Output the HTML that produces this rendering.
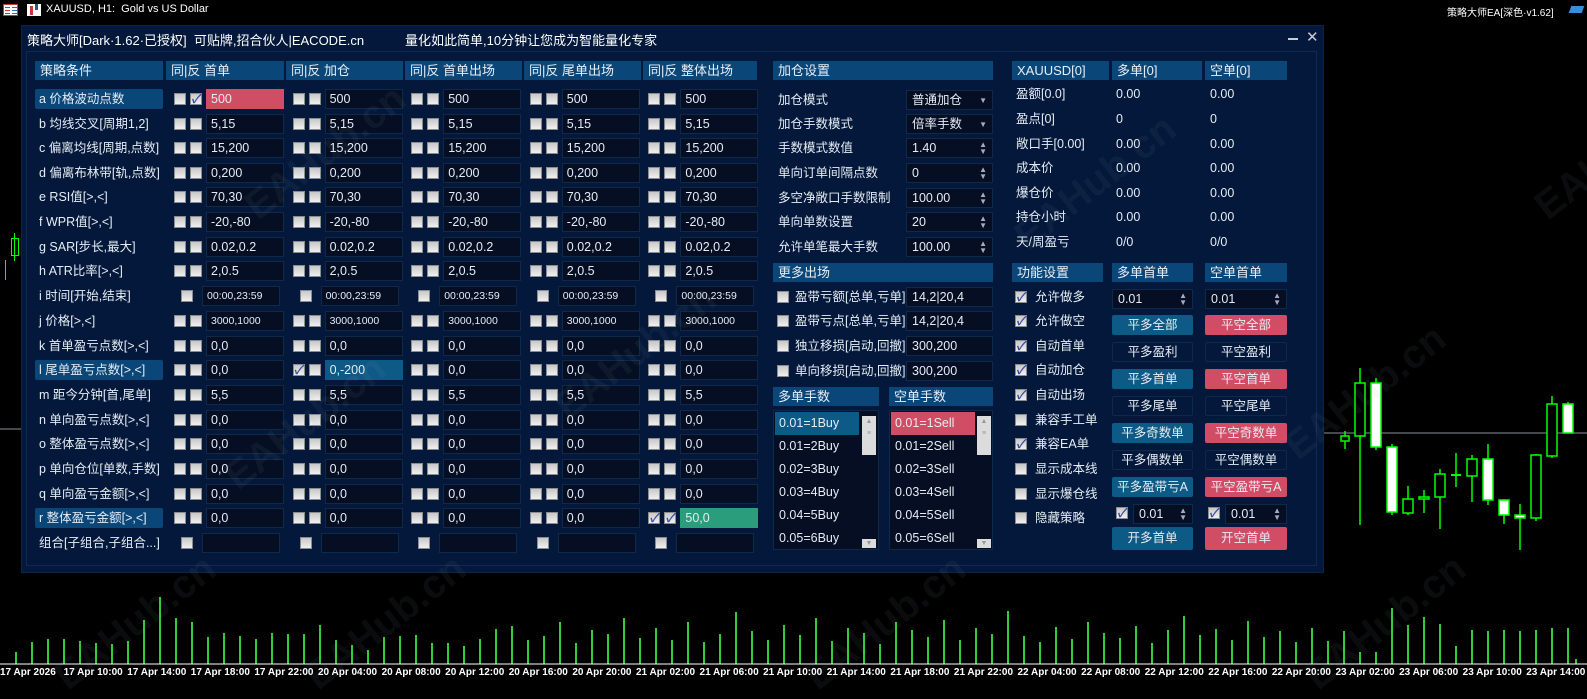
<!DOCTYPE html>
<html><head><meta charset="utf-8"><style>
*{box-sizing:border-box;margin:0;padding:0}
body{width:1587px;height:680px;background:#000;position:relative;overflow:hidden;font-family:"Liberation Sans","Noto Sans CJK SC",sans-serif;color:#e6ecf3;font-size:13px}
.a{position:absolute}
.panel{left:21px;top:25px;width:1303px;height:548px;background:#03183a;border:1px solid #0a2448}
.inner{left:26px;top:51px;width:1291px;height:515px;border:1px solid #0c2a52}
.hd{position:absolute;height:19px;background:#0b4679;color:#e8eef5;line-height:19px;padding-left:5px;font-size:13px}
.row{position:absolute;left:35px;height:20px;display:flex;align-items:center}
.lb{width:128px;height:20px;line-height:20px;padding-left:4px;white-space:nowrap;font-size:12.5px;margin-right:11px;flex:none}
.lb.h{background:#0b4679;border-radius:2px}
.g{width:118.6px;display:flex;align-items:center;flex:none}
.cb{width:12px;height:12px;background:linear-gradient(#c8c8c8,#f0f0f0);border:1px solid #8c8c8c;margin-right:4px;flex:none;position:relative}
.cb.a{position:absolute;margin:0}
.cb.k::after{content:"✓";position:absolute;left:0;top:-4px;font-size:12px;color:#3a4aa0;font-weight:bold}
.in{width:78px;height:20px;background:#050e22;border:1px solid #0e2a48;line-height:18px;padding-left:4px;font-size:12.5px;flex:none;white-space:nowrap;overflow:hidden}
.sm{font-size:10.5px}
.red{background:#d04d65;border-color:#d04d65}
.blu{background:#0d5a86;border-color:#0d5a86}
.grn{background:#2a9d7c;border-color:#2a9d7c}
.one{margin-left:7px;margin-right:9px}
.lab{position:absolute;font-size:12.5px;white-space:nowrap;line-height:20px;height:20px}
.box{position:absolute;height:20px;background:#050e22;border:1px solid #0e2a48;line-height:18px;padding-left:5px;font-size:12.5px}
.arr{position:absolute;right:5px;top:0;font-size:8px;line-height:7px;color:#aab;text-align:center}
.btn{position:absolute;height:20px;line-height:20px;text-align:center;font-size:12.5px;border-radius:2px}
.bb{background:#0d5a86}
.br{background:#d04d65}
.bo{border:1px solid #0e2a48;line-height:18px}
.item{position:absolute;height:23px;line-height:23px;padding-left:4px;font-size:12.5px}
.wm{position:absolute;font:bold 40px "Liberation Sans",sans-serif;color:rgba(160,170,185,0.07);transform:rotate(-38deg);white-space:nowrap}
</style></head><body>

<div class="a" style="left:3px;top:4px;width:15px;height:12px;background:#fff;border:1px solid #c33"><div class="a" style="left:1px;top:2px;width:5px;height:1px;background:#c33;box-shadow:0 3px #c33,0 6px #c33,7px 0 #36c,7px 3px #36c,7px 6px #36c"></div></div>
<div class="a" style="left:27px;top:4px;width:14px;height:12px;background:#fff"><div class="a" style="left:3px;top:2px;width:3px;height:9px;background:#c33"></div><div class="a" style="left:8px;top:0;width:3px;height:6px;background:#357"></div></div>
<div class="a" style="left:46px;top:3px;font-size:11px;color:#fff">XAUUSD, H1:&nbsp; Gold vs US Dollar</div>
<div class="a" style="left:1447px;top:4px;font-size:10px;color:#fff">策略大师EA[深色·v1.62]</div>
<div class="a" style="left:1570px;top:6px;width:13px;height:7px;background:#3a8ed8;transform:skewX(-20deg)"></div>

<div class="a" style="left:14px;top:233px;width:1px;height:28px;background:#0f0"></div>
<div class="a" style="left:11px;top:238px;width:8px;height:18px;border:1px solid #0f0"></div>
<div class="a" style="left:5px;top:260px;width:1px;height:20px;background:#0f0"></div>

<svg class="a" style="left:0;top:0" width="1587" height="680">
<line x1="1320" y1="433" x2="1587" y2="433" stroke="#8a8f99" stroke-width="1"/>
<line x1="0" y1="429" x2="21" y2="429" stroke="#8a8f99" stroke-width="1"/>
<g stroke="#00ff00" stroke-width="1.5">
<line x1="1345" y1="431" x2="1345" y2="449"/><rect x="1341" y="436" width="8" height="5" fill="#000"/>
<line x1="1360" y1="368" x2="1360" y2="525"/><rect x="1355" y="383" width="10" height="53" fill="#000"/>
<line x1="1376" y1="378" x2="1376" y2="450"/><rect x="1371" y="383" width="10" height="64" fill="#fff"/>
<line x1="1392" y1="444" x2="1392" y2="515"/><rect x="1387" y="447" width="10" height="65" fill="#fff"/>
<line x1="1408" y1="486" x2="1408" y2="515"/><rect x="1403" y="499" width="10" height="14" fill="#000"/>
<line x1="1424" y1="490" x2="1424" y2="513"/><rect x="1419" y="497" width="10" height="2" fill="#000"/>
<line x1="1440" y1="469" x2="1440" y2="529"/><rect x="1435" y="474" width="10" height="23" fill="#000"/>
<line x1="1456" y1="453" x2="1456" y2="487"/><line x1="1451" y1="475" x2="1461" y2="475" stroke-width="2"/>
<line x1="1472" y1="455" x2="1472" y2="502"/><rect x="1467" y="459" width="10" height="17" fill="#000"/>
<line x1="1488" y1="444" x2="1488" y2="505"/><rect x="1483" y="459" width="10" height="41" fill="#fff"/>
<line x1="1504" y1="499" x2="1504" y2="524"/><rect x="1499" y="500" width="10" height="15" fill="#fff"/>
<line x1="1520" y1="504" x2="1520" y2="550"/><rect x="1515" y="515" width="10" height="3" fill="#fff"/>
<line x1="1536" y1="454" x2="1536" y2="521"/><rect x="1531" y="455" width="10" height="63" fill="#000"/>
<line x1="1552" y1="396" x2="1552" y2="458"/><rect x="1547" y="404" width="10" height="52" fill="#000"/>
<line x1="1568" y1="402" x2="1568" y2="433"/><rect x="1563" y="404" width="10" height="29" fill="#fff"/>
</g>
<path stroke="#32cd32" stroke-width="2" d="M16 664V652M32 664V642M48 664V639M64 664V639M80 664V641M96 664V643M112 664V644M128 664V641M144 664V620M160 664V597M176 664V618M192 664V622M208 664V637M224 664V633M240 664V636M256 664V639M272 664V633M288 664V634M304 664V634M320 664V625M336 664V640M352 664V645M368 664V650M384 664V637M400 664V636M416 664V635M432 664V643M448 664V643M464 664V646M480 664V639M496 664V629M512 664V626M528 664V640M544 664V636M560 664V622M576 664V643M592 664V630M608 664V634M624 664V618M640 664V638M656 664V628M672 664V640M688 664V622M704 664V642M720 664V634M736 664V612M752 664V631M768 664V640M784 664V625M800 664V635M816 664V618M832 664V641M848 664V628M864 664V633M880 664V644M896 664V622M912 664V630M928 664V637M944 664V620M960 664V640M976 664V628M992 664V634M1008 664V611M1024 664V636M1040 664V642M1056 664V627M1072 664V639M1088 664V622M1104 664V633M1120 664V638M1136 664V626M1152 664V643M1168 664V630M1184 664V616M1200 664V635M1216 664V629M1232 664V640M1248 664V621M1264 664V637M1280 664V631M1296 664V642M1312 664V628M1328 664V641M1344 664V631M1360 664V652M1376 664V652M1392 664V608M1408 664V625M1424 664V617M1440 664V624M1456 664V646M1472 664V630M1488 664V631M1504 664V630M1520 664V631M1536 664V630M1552 664V628M1568 664V628M1576 664V659"/>
<line x1="0" y1="664" x2="1587" y2="664" stroke="#fff" stroke-width="1"/>
</svg>
<div class="a" style="left:0;top:667px;display:flex;font:bold 10px 'Liberation Sans',sans-serif;color:#fff;white-space:nowrap">
<span style="width:63.6px">17 Apr 2026</span><span style="width:63.6px">17 Apr 10:00</span><span style="width:63.6px">17 Apr 14:00</span><span style="width:63.6px">17 Apr 18:00</span><span style="width:63.6px">17 Apr 22:00</span><span style="width:63.6px">20 Apr 04:00</span><span style="width:63.6px">20 Apr 08:00</span><span style="width:63.6px">20 Apr 12:00</span><span style="width:63.6px">20 Apr 16:00</span><span style="width:63.6px">20 Apr 20:00</span><span style="width:63.6px">21 Apr 02:00</span><span style="width:63.6px">21 Apr 06:00</span><span style="width:63.6px">21 Apr 10:00</span><span style="width:63.6px">21 Apr 14:00</span><span style="width:63.6px">21 Apr 18:00</span><span style="width:63.6px">21 Apr 22:00</span><span style="width:63.6px">22 Apr 04:00</span><span style="width:63.6px">22 Apr 08:00</span><span style="width:63.6px">22 Apr 12:00</span><span style="width:63.6px">22 Apr 16:00</span><span style="width:63.6px">22 Apr 20:00</span><span style="width:63.6px">23 Apr 02:00</span><span style="width:63.6px">23 Apr 06:00</span><span style="width:63.6px">23 Apr 10:00</span><span style="width:63.6px">23 Apr 14:00</span>
</div>

<div class="a panel"></div>
<div class="a inner"></div>
<div class="a" style="left:27px;top:30px;font-size:13px;color:#fff">策略大师[Dark·1.62·已授权]&nbsp; 可贴牌,招合伙人|EACODE.cn</div>
<div class="a" style="left:405px;top:30px;font-size:13px;color:#fff">量化如此简单,10分钟让您成为智能量化专家</div>
<div class="a" style="left:1288px;top:38px;width:10px;height:2px;background:#c8ccd4"></div>
<div class="a" style="left:1306px;top:28px;font-size:15px;color:#c8ccd4">✕</div>

<div class="hd" style="left:35px;top:61px;width:128px">策略条件</div>
<div class="hd" style="left:166px;top:61px;width:118px">同|反 首单</div>
<div class="hd" style="left:286px;top:61px;width:117px">同|反 加仓</div>
<div class="hd" style="left:405px;top:61px;width:117px">同|反 首单出场</div>
<div class="hd" style="left:524px;top:61px;width:117px">同|反 尾单出场</div>
<div class="hd" style="left:643px;top:61px;width:114px">同|反 整体出场</div>

<div class="row" style="top:89px"><div class="lb h">a 价格波动点数</div><div class="g"><i class="cb"></i><i class="cb k"></i><div class="in red">500</div></div><div class="g"><i class="cb"></i><i class="cb"></i><div class="in">500</div></div><div class="g"><i class="cb"></i><i class="cb"></i><div class="in">500</div></div><div class="g"><i class="cb"></i><i class="cb"></i><div class="in">500</div></div><div class="g"><i class="cb"></i><i class="cb"></i><div class="in">500</div></div></div>
<div class="row" style="top:114px"><div class="lb">b 均线交叉[周期1,2]</div><div class="g"><i class="cb"></i><i class="cb"></i><div class="in">5,15</div></div><div class="g"><i class="cb"></i><i class="cb"></i><div class="in">5,15</div></div><div class="g"><i class="cb"></i><i class="cb"></i><div class="in">5,15</div></div><div class="g"><i class="cb"></i><i class="cb"></i><div class="in">5,15</div></div><div class="g"><i class="cb"></i><i class="cb"></i><div class="in">5,15</div></div></div>
<div class="row" style="top:138px"><div class="lb">c 偏离均线[周期,点数]</div><div class="g"><i class="cb"></i><i class="cb"></i><div class="in">15,200</div></div><div class="g"><i class="cb"></i><i class="cb"></i><div class="in">15,200</div></div><div class="g"><i class="cb"></i><i class="cb"></i><div class="in">15,200</div></div><div class="g"><i class="cb"></i><i class="cb"></i><div class="in">15,200</div></div><div class="g"><i class="cb"></i><i class="cb"></i><div class="in">15,200</div></div></div>
<div class="row" style="top:163px"><div class="lb">d 偏离布林带[轨,点数]</div><div class="g"><i class="cb"></i><i class="cb"></i><div class="in">0,200</div></div><div class="g"><i class="cb"></i><i class="cb"></i><div class="in">0,200</div></div><div class="g"><i class="cb"></i><i class="cb"></i><div class="in">0,200</div></div><div class="g"><i class="cb"></i><i class="cb"></i><div class="in">0,200</div></div><div class="g"><i class="cb"></i><i class="cb"></i><div class="in">0,200</div></div></div>
<div class="row" style="top:187px"><div class="lb">e RSI值[&gt;,&lt;]</div><div class="g"><i class="cb"></i><i class="cb"></i><div class="in">70,30</div></div><div class="g"><i class="cb"></i><i class="cb"></i><div class="in">70,30</div></div><div class="g"><i class="cb"></i><i class="cb"></i><div class="in">70,30</div></div><div class="g"><i class="cb"></i><i class="cb"></i><div class="in">70,30</div></div><div class="g"><i class="cb"></i><i class="cb"></i><div class="in">70,30</div></div></div>
<div class="row" style="top:212px"><div class="lb">f WPR值[&gt;,&lt;]</div><div class="g"><i class="cb"></i><i class="cb"></i><div class="in">-20,-80</div></div><div class="g"><i class="cb"></i><i class="cb"></i><div class="in">-20,-80</div></div><div class="g"><i class="cb"></i><i class="cb"></i><div class="in">-20,-80</div></div><div class="g"><i class="cb"></i><i class="cb"></i><div class="in">-20,-80</div></div><div class="g"><i class="cb"></i><i class="cb"></i><div class="in">-20,-80</div></div></div>
<div class="row" style="top:237px"><div class="lb">g SAR[步长,最大]</div><div class="g"><i class="cb"></i><i class="cb"></i><div class="in">0.02,0.2</div></div><div class="g"><i class="cb"></i><i class="cb"></i><div class="in">0.02,0.2</div></div><div class="g"><i class="cb"></i><i class="cb"></i><div class="in">0.02,0.2</div></div><div class="g"><i class="cb"></i><i class="cb"></i><div class="in">0.02,0.2</div></div><div class="g"><i class="cb"></i><i class="cb"></i><div class="in">0.02,0.2</div></div></div>
<div class="row" style="top:261px"><div class="lb">h ATR比率[&gt;,&lt;]</div><div class="g"><i class="cb"></i><i class="cb"></i><div class="in">2,0.5</div></div><div class="g"><i class="cb"></i><i class="cb"></i><div class="in">2,0.5</div></div><div class="g"><i class="cb"></i><i class="cb"></i><div class="in">2,0.5</div></div><div class="g"><i class="cb"></i><i class="cb"></i><div class="in">2,0.5</div></div><div class="g"><i class="cb"></i><i class="cb"></i><div class="in">2,0.5</div></div></div>
<div class="row" style="top:286px"><div class="lb">i 时间[开始,结束]</div><div class="g"><i class="cb one"></i><div class="in sm">00:00,23:59</div></div><div class="g"><i class="cb one"></i><div class="in sm">00:00,23:59</div></div><div class="g"><i class="cb one"></i><div class="in sm">00:00,23:59</div></div><div class="g"><i class="cb one"></i><div class="in sm">00:00,23:59</div></div><div class="g"><i class="cb one"></i><div class="in sm">00:00,23:59</div></div></div>
<div class="row" style="top:311px"><div class="lb">j 价格[&gt;,&lt;]</div><div class="g"><i class="cb"></i><i class="cb"></i><div class="in sm">3000,1000</div></div><div class="g"><i class="cb"></i><i class="cb"></i><div class="in sm">3000,1000</div></div><div class="g"><i class="cb"></i><i class="cb"></i><div class="in sm">3000,1000</div></div><div class="g"><i class="cb"></i><i class="cb"></i><div class="in sm">3000,1000</div></div><div class="g"><i class="cb"></i><i class="cb"></i><div class="in sm">3000,1000</div></div></div>
<div class="row" style="top:336px"><div class="lb">k 首单盈亏点数[&gt;,&lt;]</div><div class="g"><i class="cb"></i><i class="cb"></i><div class="in">0,0</div></div><div class="g"><i class="cb"></i><i class="cb"></i><div class="in">0,0</div></div><div class="g"><i class="cb"></i><i class="cb"></i><div class="in">0,0</div></div><div class="g"><i class="cb"></i><i class="cb"></i><div class="in">0,0</div></div><div class="g"><i class="cb"></i><i class="cb"></i><div class="in">0,0</div></div></div>
<div class="row" style="top:360px"><div class="lb h">l 尾单盈亏点数[&gt;,&lt;]</div><div class="g"><i class="cb"></i><i class="cb"></i><div class="in">0,0</div></div><div class="g"><i class="cb k"></i><i class="cb"></i><div class="in blu">0,-200</div></div><div class="g"><i class="cb"></i><i class="cb"></i><div class="in">0,0</div></div><div class="g"><i class="cb"></i><i class="cb"></i><div class="in">0,0</div></div><div class="g"><i class="cb"></i><i class="cb"></i><div class="in">0,0</div></div></div>
<div class="row" style="top:385px"><div class="lb">m 距今分钟[首,尾单]</div><div class="g"><i class="cb"></i><i class="cb"></i><div class="in">5,5</div></div><div class="g"><i class="cb"></i><i class="cb"></i><div class="in">5,5</div></div><div class="g"><i class="cb"></i><i class="cb"></i><div class="in">5,5</div></div><div class="g"><i class="cb"></i><i class="cb"></i><div class="in">5,5</div></div><div class="g"><i class="cb"></i><i class="cb"></i><div class="in">5,5</div></div></div>
<div class="row" style="top:410px"><div class="lb">n 单向盈亏点数[&gt;,&lt;]</div><div class="g"><i class="cb"></i><i class="cb"></i><div class="in">0,0</div></div><div class="g"><i class="cb"></i><i class="cb"></i><div class="in">0,0</div></div><div class="g"><i class="cb"></i><i class="cb"></i><div class="in">0,0</div></div><div class="g"><i class="cb"></i><i class="cb"></i><div class="in">0,0</div></div><div class="g"><i class="cb"></i><i class="cb"></i><div class="in">0,0</div></div></div>
<div class="row" style="top:434px"><div class="lb">o 整体盈亏点数[&gt;,&lt;]</div><div class="g"><i class="cb"></i><i class="cb"></i><div class="in">0,0</div></div><div class="g"><i class="cb"></i><i class="cb"></i><div class="in">0,0</div></div><div class="g"><i class="cb"></i><i class="cb"></i><div class="in">0,0</div></div><div class="g"><i class="cb"></i><i class="cb"></i><div class="in">0,0</div></div><div class="g"><i class="cb"></i><i class="cb"></i><div class="in">0,0</div></div></div>
<div class="row" style="top:459px"><div class="lb">p 单向仓位[单数,手数]</div><div class="g"><i class="cb"></i><i class="cb"></i><div class="in">0,0</div></div><div class="g"><i class="cb"></i><i class="cb"></i><div class="in">0,0</div></div><div class="g"><i class="cb"></i><i class="cb"></i><div class="in">0,0</div></div><div class="g"><i class="cb"></i><i class="cb"></i><div class="in">0,0</div></div><div class="g"><i class="cb"></i><i class="cb"></i><div class="in">0,0</div></div></div>
<div class="row" style="top:484px"><div class="lb">q 单向盈亏金额[&gt;,&lt;]</div><div class="g"><i class="cb"></i><i class="cb"></i><div class="in">0,0</div></div><div class="g"><i class="cb"></i><i class="cb"></i><div class="in">0,0</div></div><div class="g"><i class="cb"></i><i class="cb"></i><div class="in">0,0</div></div><div class="g"><i class="cb"></i><i class="cb"></i><div class="in">0,0</div></div><div class="g"><i class="cb"></i><i class="cb"></i><div class="in">0,0</div></div></div>
<div class="row" style="top:508px"><div class="lb h">r 整体盈亏金额[&gt;,&lt;]</div><div class="g"><i class="cb"></i><i class="cb"></i><div class="in">0,0</div></div><div class="g"><i class="cb"></i><i class="cb"></i><div class="in">0,0</div></div><div class="g"><i class="cb"></i><i class="cb"></i><div class="in">0,0</div></div><div class="g"><i class="cb"></i><i class="cb"></i><div class="in">0,0</div></div><div class="g"><i class="cb k"></i><i class="cb k"></i><div class="in grn">50,0</div></div></div>
<div class="row" style="top:533px"><div class="lb">组合[子组合,子组合...]</div><div class="g"><i class="cb one"></i><div class="in"></div></div><div class="g"><i class="cb one"></i><div class="in"></div></div><div class="g"><i class="cb one"></i><div class="in"></div></div><div class="g"><i class="cb one"></i><div class="in"></div></div><div class="g"><i class="cb one"></i><div class="in"></div></div></div>

<div class="hd" style="left:773px;top:61px;width:220px">加仓设置</div>
<div class="lab" style="left:778px;top:90px">加仓模式</div><div class="box" style="left:906px;top:90px;width:87px">普通加仓<span class="arr" style="top:6px">▼</span></div>
<div class="lab" style="left:778px;top:114px">加仓手数模式</div><div class="box" style="left:906px;top:114px;width:87px">倍率手数<span class="arr" style="top:6px">▼</span></div>
<div class="lab" style="left:778px;top:138px">手数模式数值</div><div class="box" style="left:906px;top:138px;width:87px">1.40<span class="arr" style="top:2px">▲<br>▼</span></div>
<div class="lab" style="left:778px;top:163px">单向订单间隔点数</div><div class="box" style="left:906px;top:163px;width:87px">0<span class="arr" style="top:2px">▲<br>▼</span></div>
<div class="lab" style="left:778px;top:188px">多空净敞口手数限制</div><div class="box" style="left:906px;top:188px;width:87px">100.00<span class="arr" style="top:2px">▲<br>▼</span></div>
<div class="lab" style="left:778px;top:212px">单向单数设置</div><div class="box" style="left:906px;top:212px;width:87px">20<span class="arr" style="top:2px">▲<br>▼</span></div>
<div class="lab" style="left:778px;top:237px">允许单笔最大手数</div><div class="box" style="left:906px;top:237px;width:87px">100.00<span class="arr" style="top:2px">▲<br>▼</span></div>

<div class="hd" style="left:773px;top:263px;width:220px">更多出场</div>
<i class="cb a" style="left:777px;top:291px"></i><div class="lab" style="left:795px;top:287px">盈带亏额[总单,亏单]</div><div class="box" style="left:906px;top:287px;width:87px">14,2|20,4</div>
<i class="cb a" style="left:777px;top:315px"></i><div class="lab" style="left:795px;top:311px">盈带亏点[总单,亏单]</div><div class="box" style="left:906px;top:311px;width:87px">14,2|20,4</div>
<i class="cb a" style="left:777px;top:340px"></i><div class="lab" style="left:795px;top:336px">独立移损[启动,回撤]</div><div class="box" style="left:906px;top:336px;width:87px">300,200</div>
<i class="cb a" style="left:777px;top:365px"></i><div class="lab" style="left:795px;top:361px">单向移损[启动,回撤]</div><div class="box" style="left:906px;top:361px;width:87px">300,200</div>

<div class="hd" style="left:773px;top:387px;width:106px">多单手数</div>
<div class="hd" style="left:889px;top:387px;width:104px">空单手数</div>
<div class="a" style="left:773px;top:410px;width:106px;height:140px;background:#050e22;border:1px solid #0e2a48"></div>
<div class="a" style="left:889px;top:410px;width:104px;height:140px;background:#050e22;border:1px solid #0e2a48"></div>
<div class="item" style="left:775px;top:412px;width:84px;background:#0d5a86">0.01=1Buy</div>
<div class="item" style="left:775px;top:435px">0.01=2Buy</div>
<div class="item" style="left:775px;top:458px">0.02=3Buy</div>
<div class="item" style="left:775px;top:481px">0.03=4Buy</div>
<div class="item" style="left:775px;top:504px">0.04=5Buy</div>
<div class="item" style="left:775px;top:527px">0.05=6Buy</div>
<div class="item" style="left:891px;top:412px;width:84px;background:#d04d65">0.01=1Sell</div>
<div class="item" style="left:891px;top:435px">0.01=2Sell</div>
<div class="item" style="left:891px;top:458px">0.02=3Sell</div>
<div class="item" style="left:891px;top:481px">0.03=4Sell</div>
<div class="item" style="left:891px;top:504px">0.04=5Sell</div>
<div class="item" style="left:891px;top:527px">0.05=6Sell</div>
<div class="a" style="left:862px;top:416px;width:14px;height:39px;background:#dcdcdc;font-size:7px;color:#999;text-align:center;line-height:12px">▲<br>≡</div>
<div class="a" style="left:862px;top:539px;width:14px;height:9px;background:#dcdcdc;font-size:7px;color:#999;text-align:center;line-height:9px">▼</div>
<div class="a" style="left:977px;top:416px;width:14px;height:39px;background:#dcdcdc;font-size:7px;color:#999;text-align:center;line-height:12px">▲<br>≡</div>
<div class="a" style="left:977px;top:539px;width:14px;height:9px;background:#dcdcdc;font-size:7px;color:#999;text-align:center;line-height:9px">▼</div>

<div class="hd" style="left:1012px;top:61px;width:97px">XAUUSD[0]</div>
<div class="hd" style="left:1112px;top:61px;width:90px">多单[0]</div>
<div class="hd" style="left:1205px;top:61px;width:82px">空单[0]</div>
<div class="lab" style="left:1016px;top:84px">盈额[0.0]</div><div class="lab" style="left:1116px;top:84px">0.00</div><div class="lab" style="left:1210px;top:84px">0.00</div>
<div class="lab" style="left:1016px;top:109px">盈点[0]</div><div class="lab" style="left:1116px;top:109px">0</div><div class="lab" style="left:1210px;top:109px">0</div>
<div class="lab" style="left:1016px;top:134px">敞口手[0.00]</div><div class="lab" style="left:1116px;top:134px">0.00</div><div class="lab" style="left:1210px;top:134px">0.00</div>
<div class="lab" style="left:1016px;top:158px">成本价</div><div class="lab" style="left:1116px;top:158px">0.00</div><div class="lab" style="left:1210px;top:158px">0.00</div>
<div class="lab" style="left:1016px;top:183px">爆仓价</div><div class="lab" style="left:1116px;top:183px">0.00</div><div class="lab" style="left:1210px;top:183px">0.00</div>
<div class="lab" style="left:1016px;top:207px">持仓小时</div><div class="lab" style="left:1116px;top:207px">0.00</div><div class="lab" style="left:1210px;top:207px">0.00</div>
<div class="lab" style="left:1016px;top:232px">天/周盈亏</div><div class="lab" style="left:1116px;top:232px">0/0</div><div class="lab" style="left:1210px;top:232px">0/0</div>

<div class="hd" style="left:1012px;top:263px;width:91px">功能设置</div>
<div class="hd" style="left:1112px;top:263px;width:81px">多单首单</div>
<div class="hd" style="left:1205px;top:263px;width:82px">空单首单</div>
<i class="cb a k" style="left:1015px;top:291px"></i><div class="lab" style="left:1035px;top:287px">允许做多</div>
<i class="cb a k" style="left:1015px;top:315px"></i><div class="lab" style="left:1035px;top:311px">允许做空</div>
<i class="cb a k" style="left:1015px;top:340px"></i><div class="lab" style="left:1035px;top:336px">自动首单</div>
<i class="cb a k" style="left:1015px;top:364px"></i><div class="lab" style="left:1035px;top:360px">自动加仓</div>
<i class="cb a k" style="left:1015px;top:389px"></i><div class="lab" style="left:1035px;top:385px">自动出场</div>
<i class="cb a" style="left:1015px;top:414px"></i><div class="lab" style="left:1035px;top:410px">兼容手工单</div>
<i class="cb a k" style="left:1015px;top:438px"></i><div class="lab" style="left:1035px;top:434px">兼容EA单</div>
<i class="cb a" style="left:1015px;top:463px"></i><div class="lab" style="left:1035px;top:459px">显示成本线</div>
<i class="cb a" style="left:1015px;top:488px"></i><div class="lab" style="left:1035px;top:484px">显示爆仓线</div>
<i class="cb a" style="left:1015px;top:512px"></i><div class="lab" style="left:1035px;top:508px">隐藏策略</div>

<div class="box" style="left:1112px;top:289px;width:81px">0.01<span class="arr" style="top:2px">▲<br>▼</span></div>
<div class="box" style="left:1205px;top:289px;width:82px">0.01<span class="arr" style="top:2px">▲<br>▼</span></div>
<div class="btn bb" style="left:1112px;top:315px;width:81px">平多全部</div><div class="btn br" style="left:1205px;top:315px;width:82px">平空全部</div>
<div class="btn bo" style="left:1112px;top:342px;width:81px">平多盈利</div><div class="btn bo" style="left:1205px;top:342px;width:82px">平空盈利</div>
<div class="btn bb" style="left:1112px;top:369px;width:81px">平多首单</div><div class="btn br" style="left:1205px;top:369px;width:82px">平空首单</div>
<div class="btn bo" style="left:1112px;top:396px;width:81px">平多尾单</div><div class="btn bo" style="left:1205px;top:396px;width:82px">平空尾单</div>
<div class="btn bb" style="left:1112px;top:423px;width:81px">平多奇数单</div><div class="btn br" style="left:1205px;top:423px;width:82px">平空奇数单</div>
<div class="btn bo" style="left:1112px;top:450px;width:81px">平多偶数单</div><div class="btn bo" style="left:1205px;top:450px;width:82px">平空偶数单</div>
<div class="btn bb" style="left:1112px;top:477px;width:81px">平多盈带亏A</div><div class="btn br" style="left:1205px;top:477px;width:82px">平空盈带亏A</div>
<i class="cb a k" style="left:1116px;top:507px"></i><div class="box" style="left:1133px;top:504px;width:60px">0.01<span class="arr" style="top:2px">▲<br>▼</span></div>
<i class="cb a k" style="left:1208px;top:507px"></i><div class="box" style="left:1225px;top:504px;width:62px">0.01<span class="arr" style="top:2px">▲<br>▼</span></div>
<div class="btn bb" style="left:1112px;top:527px;width:81px;height:23px;line-height:23px">开多首单</div>
<div class="btn br" style="left:1205px;top:527px;width:82px;height:23px;line-height:23px">开空首单</div>

<div class="wm" style="left:230px;top:130px">EAHub.cn</div>
<div class="wm" style="left:540px;top:330px">EAHub.cn</div>
<div class="wm" style="left:210px;top:400px">EAHub.cn</div>
<div class="wm" style="left:1000px;top:160px">EAHub.cn</div>
<div class="wm" style="left:1270px;top:370px">EAHub.cn</div>
<div class="wm" style="left:1520px;top:130px">EAHub.cn</div>
<div class="wm" style="left:40px;top:600px">EAHub.cn</div>
<div class="wm" style="left:290px;top:600px">EAHub.cn</div>
<div class="wm" style="left:790px;top:600px">EAHub.cn</div>
<div class="wm" style="left:1290px;top:600px">EAHub.cn</div>
</body></html>
